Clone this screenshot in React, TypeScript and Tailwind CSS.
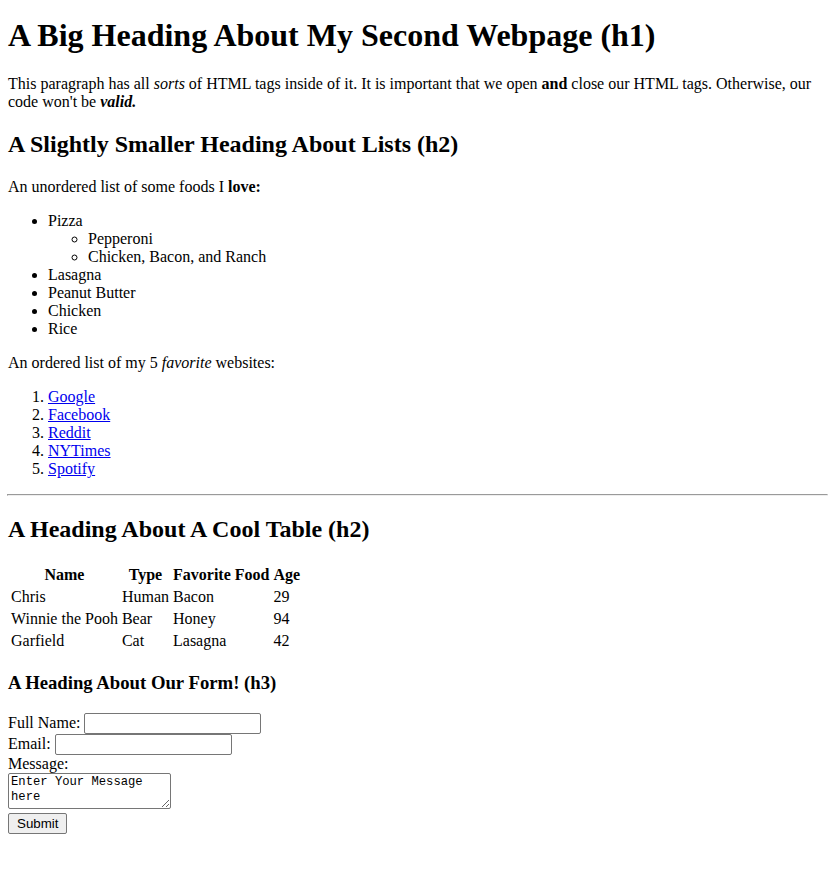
export default function App() {
  return (
    <div className="m-2 font-['Liberation_Serif',serif] text-[16px] leading-[normal] text-black">
      <h1 className="text-[32px] font-bold leading-[normal] mt-[17px] mb-[21.44px]">
        A Big Heading About My Second Webpage (h1)
      </h1>
      <p className="my-4">
        This paragraph has all <em>sorts</em> of HTML tags inside of it. It is important that we open{" "}
        <strong>and</strong> close our HTML tags. Otherwise, our code won't be{" "}
        <strong>
          <em>valid.</em>
        </strong>
      </p>

      <h2 className="text-[24px] font-bold leading-[normal] my-[19.92px]">
        A Slightly Smaller Heading About Lists (h2)
      </h2>
      <p className="my-4">
        An unordered list of some foods I <strong>love:</strong>
      </p>
      <ul className="my-4 pl-10 list-disc">
        <li>
          Pizza
          <ul className="pl-10 list-[circle]">
            <li>Pepperoni</li>
            <li>Chicken, Bacon, and Ranch</li>
          </ul>
        </li>
        <li>Lasagna</li>
        <li>Peanut Butter</li>
        <li>Chicken</li>
        <li>Rice</li>
      </ul>

      <p className="my-4">
        An ordered list of my 5 <em>favorite</em> websites:
      </p>
      <ol className="my-4 pl-10 list-decimal">
        {["Google", "Facebook", "Reddit", "NYTimes", "Spotify"].map((s) => (
          <li key={s}>
            <a href="#" className="text-[#0000ee] underline">
              {s}
            </a>
          </li>
        ))}
      </ol>

      <hr className="my-2 -ml-px -mr-[2px] h-[2px] border border-t-[#9a9a9a] border-l-[#9a9a9a] border-b-[#eeeeee] border-r-[#eeeeee]" />

      <h2 className="text-[24px] font-bold leading-[normal] my-[19.92px]">
        A Heading About A Cool Table (h2)
      </h2>
      <table className="border-separate border-spacing-[2px]">
        <thead>
          <tr>
            <th className="p-px font-bold text-center">Name</th>
            <th className="p-px font-bold text-center">Type</th>
            <th className="p-px font-bold text-center">Favorite Food</th>
            <th className="p-px font-bold text-center">Age</th>
          </tr>
        </thead>
        <tbody>
          {[
            ["Chris", "Human", "Bacon", "29"],
            ["Winnie the Pooh", "Bear", "Honey", "94"],
            ["Garfield", "Cat", "Lasagna", "42"],
          ].map((r) => (
            <tr key={r[0]}>
              {r.map((c, i) => (
                <td key={i} className="p-px text-left">
                  {c}
                </td>
              ))}
            </tr>
          ))}
        </tbody>
      </table>

      <h3 className="text-[18.72px] font-bold leading-[normal] my-[18.72px]">
        A Heading About Our Form! (h3)
      </h3>
      <form onSubmit={(e) => e.preventDefault()}>
        Full Name:{" "}
        <input
          type="text"
          className="w-[177px] h-[21px] px-[2px] py-px border border-[#767676] rounded-[2px] bg-white text-[13.33px] font-['Liberation_Sans',sans-serif] align-baseline"
        />
        <br />
        Email:{" "}
        <input
          type="email"
          className="w-[177px] h-[21px] px-[2px] py-px border border-[#767676] rounded-[2px] bg-white text-[13.33px] font-['Liberation_Sans',sans-serif] align-baseline"
        />
        <br />
        Message:
        <br />
        <textarea
          defaultValue="Enter Your Message here"
          className="w-[163px] h-[36px] px-[2px] py-px border border-[#767676] rounded-[2px] bg-white text-[12.2px] leading-[15px] font-['Liberation_Mono',monospace] align-baseline"
        />
        <br />
        <button
          type="submit"
          className="h-[21px] px-[8px] py-px border border-[#767676] rounded-[2px] bg-[#efefef] text-[13.33px] leading-[normal] font-['Liberation_Sans',sans-serif]"
        >
          Submit
        </button>
      </form>
    </div>
  );
}
